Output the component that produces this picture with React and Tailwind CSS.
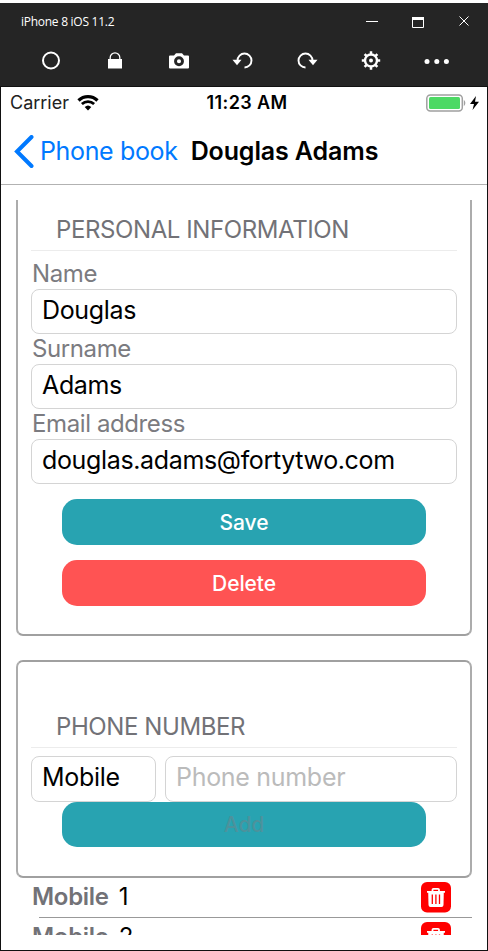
const inter = "font-['Inter','Liberation_Sans',sans-serif]";

function Icon({ children, w = 24, h = 24 }) {
  return (
    <svg width={w} height={h} viewBox={`0 0 ${w} ${h}`} fill="none" className="block shrink-0">
      {children}
    </svg>
  );
}

function ToolCell({ children }) {
  return <div className="flex w-16 justify-center">{children}</div>;
}

function TitleBar() {
  return (
    <div className="flex h-[37px] shrink-0 items-center justify-between pl-[21px] pr-[19px] text-white">
      <span className="font-['Open_Sans','Noto_Sans',sans-serif] text-[12px] leading-[16px] tracking-[-0.27px]">iPhone 8 iOS 11.2</span>
      <div className="flex items-center">
        <Icon w={12} h={12}><path d="M0 5.500h12" stroke="#fff" /></Icon>
        <div className="ml-[34px]">
          <Icon w={12} h={14}><path d="M0.500 2v10.500h11V2" stroke="#fff" /><path d="M0 3.500h12" stroke="#fff" strokeWidth="3" /></Icon>
        </div>
        <div className="ml-[35px]">
          <Icon w={10} h={12}><path d="M0.500 0.500l9 9M9.500 0.500l-9 9" stroke="#fff" /></Icon>
        </div>
      </div>
    </div>
  );
}

function Toolbar() {
  return (
    <div className="flex h-[46px] shrink-0 pl-[19px] pt-[9px]">
      <ToolCell><Icon><circle cx="12" cy="11.5" r="8" stroke="#fff" strokeWidth="2" /></Icon></ToolCell>
      <ToolCell>
        <Icon><path d="M5 10h14v9.500H5z" fill="#fff" /><path d="M7.200 10.500V8.600a4.800 4.800 0 0 1 9.600 0V10.500" stroke="#fff" strokeWidth="1.300" /></Icon>
      </ToolCell>
      <ToolCell>
        <Icon>
          <path d="M3 6.500h4l2-2.300h6l2 2.300h4a1 1 0 0 1 1 1v11a1 1 0 0 1-1 1H3a1 1 0 0 1-1-1v-11a1 1 0 0 1 1-1z" fill="#fff" />
          <circle cx="12" cy="12.300" r="3.500" stroke="#252525" strokeWidth="2.900" />
        </Icon>
      </ToolCell>
      <ToolCell>
        <Icon><path d="M6.500 11.500a7 7 0 1 1 7 7" stroke="#fff" strokeWidth="1.900" /><path d="M1.500 10.700h9l-4.500 5.500z" fill="#fff" /></Icon>
      </ToolCell>
      <ToolCell>
        <Icon><path d="M17.500 11.500a7 7 0 1 0 -7 7" stroke="#fff" strokeWidth="1.900" /><path d="M22.500 10.700h-9l4.500 5.500z" fill="#fff" /></Icon>
      </ToolCell>
      <ToolCell>
        <Icon>
          <circle cx="12" cy="11.5" r="6" stroke="#fff" strokeWidth="2.400" />
          <circle cx="12" cy="11.5" r="2" fill="#fff" />
          <path d="M12 2.300v3M12 17.700v3M2.800 11.500h3M18.200 11.500h3M5.600 5.100l2.100 2.100M16.300 15.800l2.100 2.100M5.600 17.900l2.100-2.100M16.300 7.200l2.100-2.100" stroke="#fff" strokeWidth="2.500" />
        </Icon>
      </ToolCell>
      <ToolCell>
        <Icon w={28}><circle cx="6" cy="12.500" r="2.500" fill="#fff" /><circle cx="15.800" cy="12.500" r="2.500" fill="#fff" /><circle cx="25.400" cy="12.500" r="2.500" fill="#fff" /></Icon>
      </ToolCell>
    </div>
  );
}

function StatusBar() {
  return (
    <div className="grid h-8 shrink-0 grid-cols-3 items-center pl-[9px] pr-[8px] text-[18px] leading-8">
      <div className="flex items-center text-[#222]">
        <span>Carrier</span>
        <div className="ml-[8px]">
          <Icon w={22} h={16}>
            <path d="M1.500 5.500a13.800 13.800 0 0 1 19 0" stroke="#000" strokeWidth="3.300" />
            <path d="M4.900 9a9 9 0 0 1 12.200 0" stroke="#000" strokeWidth="2.800" />
            <path d="M11 15.500l-3.300-3.400a4.800 4.800 0 0 1 6.600 0z" fill="#000" />
          </Icon>
        </div>
      </div>
      <div className="pl-[5px] text-center font-semibold tracking-[0.36px] text-black"><span>11:23 AM</span></div>
      <div className="flex items-center justify-end">
        <Icon w={40} h={18}>
          <rect x="0.800" y="1" width="35.500" height="16" rx="3.500" stroke="#a0a0a0" strokeWidth="1.500" />
          <rect x="3" y="3" width="31" height="12" rx="1.500" fill="#4cd964" />
          <path d="M37.800 6c2 1 2 5 0 6z" fill="#a0a0a0" />
        </Icon>
        <div className="ml-[4px]"><Icon w={9} h={14}><path d="M6 0L0 8h4L2.500 14L9 5.700H5z" fill="#000" /></Icon></div>
      </div>
    </div>
  );
}

function NavBar() {
  return (
    <div className="flex h-[66px] shrink-0 items-center border-b border-[#b2b2b2] pl-[13px] text-[25px] leading-[66px]">
      <Icon w={20} h={34}><path d="M17.500 2L3 16.500L17.500 31" stroke="#0079ff" strokeWidth="4" strokeLinecap="round" /></Icon>
      <span className="ml-[6px] pb-[2px] tracking-[-0.35px] text-[#0079ff]">Phone book</span>
      <span className="ml-[13px] pb-[2px] font-semibold tracking-[-0.12px] text-black">Douglas Adams</span>
    </div>
  );
}

function Heading({ children }) {
  return (
    <div className="flex h-[42px] items-center border-b border-[#ececec] pl-[25px] text-[24px] tracking-[-0.4px] text-[#727277]">
      <span>{children}</span>
    </div>
  );
}

function Field({ label, value }) {
  return (
    <div className="h-[75px]">
      <div className="h-[30px] pl-px text-[24px] leading-[30px] tracking-[-0.4px] text-[#7b7b80]"><span>{label}</span></div>
      <div className="h-[45px] rounded-[8px] border border-[#d4d4d4] pl-[10px] text-[25px] leading-[41px] tracking-[-0.35px] text-black"><span>{value}</span></div>
    </div>
  );
}

function Button({ children, className }) {
  return (
    <button className={`mx-[31px] block rounded-[15px] text-center text-[21px] font-medium tracking-[-0.1px] ${className}`}>
      <span>{children}</span>
    </button>
  );
}

function PhoneRow({ number }) {
  return (
    <div className="flex h-[39px] shrink-0 items-start pl-[31px] pr-[36px] text-[24px] leading-[37px]">
      <span className="font-semibold tracking-[-0.3px] text-[#727277]">Mobile</span>
      <span className="ml-[10px] text-black">{number}</span>
      <div className="ml-auto mt-[4px]">
        <Icon w={30} h={31}>
          <rect width="30" height="30.500" rx="6" fill="#f00" />
          <path d="M6 9.900h18M11.500 9V7.800q0-1 1-1h4.500q1 0 1 1v1.200" stroke="#fff" strokeWidth="1.800" />
          <path d="M7.200 10h15.600l-.3 13q-.1 2-2 2h-11q-1.900 0-2-2z" fill="#fff" />
          <path d="M11.300 12.500v9.500M14.900 12.500v9.500M18.500 12.500v9.500" stroke="#f00" strokeWidth="1.300" />
        </Icon>
      </div>
    </div>
  );
}

export default function App() {
  return (
    <div className="h-[951px] w-[488px] bg-white pt-[3px]">
      <div className={`flex h-[948px] flex-col overflow-hidden bg-[#252525] ${inter}`}>
        <TitleBar />
        <Toolbar />
        <div className="flex h-[865px] flex-col border border-[#111] bg-white">
          <StatusBar />
          <NavBar />
          <main className="mt-[15px] flex h-[735px] shrink-0 flex-col overflow-hidden">
            <section className="mx-[15px] h-[436px] shrink-0 rounded-b-[7px] border-x-2 border-b-2 border-x-[#acacac] border-b-[#a0a0a0] px-[13px] pt-[9px]">
              <Heading>PERSONAL INFORMATION</Heading>
              <div className="h-[8px]" />
              <Field label="Name" value="Douglas" />
              <Field label="Surname" value="Adams" />
              <Field label="Email address" value="douglas.adams@fortytwo.com" />
              <Button className="mt-[15px] h-[46px] w-[364px] bg-[#28a3b1] leading-[47px] text-white">Save</Button>
              <Button className="mt-[15px] h-[46px] w-[364px] bg-[#ff5353] leading-[47px] text-white">Delete</Button>
            </section>
            <section className="mx-[15px] mt-[24px] h-[218px] shrink-0 rounded-[7px] border-2 border-x-[#acacac] border-y-[#a0a0a0] px-[13px] pt-[44px]">
              <Heading>PHONE NUMBER</Heading>
              <div className="mt-[8px] flex h-[46px] gap-[9px] text-[25px] leading-[41px] tracking-[-0.3px]">
                <div className="w-[125px] rounded-[8px] border border-[#d4d4d4] pl-[10px] text-black"><span>Mobile</span></div>
                <div className="flex-1 rounded-[8px] border border-[#d4d4d4] pl-[10px] text-[#bbb]"><span>Phone number</span></div>
              </div>
              <Button className="h-[45px] w-[364px] bg-[#28a3b1] leading-[45px] text-[#4c929c]">Add</Button>
            </section>
            <PhoneRow number="1" />
            <div className="ml-[38px] mr-[15px] h-px shrink-0 bg-[#999]" />
            <PhoneRow number="2" />
          </main>
        </div>
      </div>
    </div>
  );
}
